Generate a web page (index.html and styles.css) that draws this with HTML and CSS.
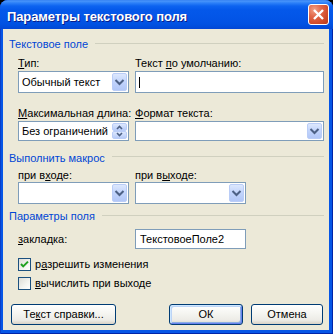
FILE: index.html
```html
<!DOCTYPE html>
<html lang="ru">
<head>
<meta charset="utf-8">
<title>Параметры текстового поля</title>
<link rel="stylesheet" href="styles.css">
</head>
<body>
<div class="window">
  <div class="titlebar">
    <span class="title">Параметры текстового поля</span>
    <span class="close">
      <svg width="21" height="21" viewBox="0 0 21 21"><path d="M6 6 L15 15 M15 6 L6 15" stroke="#fff" stroke-width="2.4" fill="none"/></svg>
    </span>
  </div>
  <div class="client">
    <div class="ghead">Текстовое поле</div>
    <div class="grid row-a">
      <div class="lbl"><u>Т</u>ип:</div>
      <div class="lbl">Текст <u>п</u>о умолчанию:</div>
      <div class="combo tall">
        <span class="val">Обычный текст</span>
        <span class="ddbtn"><svg width="15" height="18" viewBox="0 0 15 18"><polyline points="3.5,7 7.5,11 11.5,7" stroke="#4D6185" stroke-width="2" fill="none"/></svg></span>
      </div>
      <div class="edit tall"><span class="caret"></span></div>
    </div>
    <div class="grid row-b">
      <div class="lbl"><u>М</u>аксимальная длина:</div>
      <div class="lbl"><u>Ф</u>ормат текста:</div>
      <div class="combo short">
        <span class="val">Без ограничений</span>
        <span class="spin">
          <span class="sbtn"><svg width="15" height="8" viewBox="0 0 15 8"><polyline points="5,6 7.5,3.5 10,6" stroke="#4D6185" stroke-width="1.6" fill="none"/></svg></span>
          <span class="sbtn"><svg width="15" height="8" viewBox="0 0 15 8"><polyline points="5,2 7.5,4.5 10,2" stroke="#4D6185" stroke-width="1.6" fill="none"/></svg></span>
        </span>
      </div>
      <div class="combo short">
        <span class="val"></span>
        <span class="ddbtn"><svg width="15" height="16" viewBox="0 0 15 16"><polyline points="3.5,6 7.5,10 11.5,6" stroke="#4D6185" stroke-width="2" fill="none"/></svg></span>
      </div>
    </div>
    <div class="ghead g2">Выполнить макрос</div>
    <div class="grid row-c">
      <div class="lbl">при в<u>х</u>оде:</div>
      <div class="lbl">при в<u>ы</u>ходе:</div>
      <div class="combo tall">
        <span class="val"></span>
        <span class="ddbtn"><svg width="15" height="18" viewBox="0 0 15 18"><polyline points="3.5,7 7.5,11 11.5,7" stroke="#4D6185" stroke-width="2" fill="none"/></svg></span>
      </div>
      <div class="combo tall narrow">
        <span class="val"></span>
        <span class="ddbtn"><svg width="15" height="18" viewBox="0 0 15 18"><polyline points="3.5,7 7.5,11 11.5,7" stroke="#4D6185" stroke-width="2" fill="none"/></svg></span>
      </div>
    </div>
    <div class="ghead g3">Параметры поля</div>
    <div class="grid row-d">
      <div class="lbl"><u>з</u>акладка:</div>
      <div class="edit short narrow"><span class="val">ТекстовоеПоле2</span></div>
    </div>
    <div class="check c1">
      <span class="box"><svg width="11" height="11" viewBox="0 0 11 11"><path d="M2 5 L4.2 7.4 L9 2.6" stroke="#21A121" stroke-width="2" fill="none"/></svg></span>
      <span>р<u>а</u>зрешить изменения</span>
    </div>
    <div class="check c2">
      <span class="box"></span>
      <span><u>в</u>ычислить при выходе</span>
    </div>
    <div class="buttons">
      <div class="btn help">Те<u>к</u>ст справки...</div>
      <div class="btn ok">ОК</div>
      <div class="btn cancel">Отмена</div>
    </div>
  </div>
</div>
</body>
</html>
```
FILE: styles.css
```css
* { box-sizing: border-box; }
html, body { margin: 0; padding: 0; }
body {
  width: 333px;
  height: 334px;
  background: #000;
  overflow: hidden;
  font-family: "Liberation Sans", Arial, sans-serif;
  font-size: 11px;
  line-height: 13px;
  color: #000;
}
u { text-decoration: underline; text-underline-offset: 1px; }

.window {
  width: 333px;
  height: 334px;
  display: flex;
  flex-direction: column;
  background: #0656E6;
  border-radius: 8px 8px 0 0;
  box-shadow: inset 1px 0 #0A3FC8, inset -1px 0 #0024A8, inset 0 -1px #0024A8;
}
.titlebar {
  height: 29px;
  flex: none;
  display: flex;
  align-items: center;
  justify-content: space-between;
  padding: 2px 4px 0 7px;
  border-radius: 8px 8px 0 0;
  background: linear-gradient(to bottom, #2E7BF0 0px, #4A95FA 1px, #2C80F8 3px, #0D63F0 6px, #0458EA 10px, #0355E7 18px, #0152E2 24px, #004CDB 27px, #0446D4 29px);
}
.title {
  color: #fff;
  font-weight: bold;
  font-size: 13px;
  line-height: 15px;
  margin-top: 2px;
  text-shadow: 1px 1px #0A1E8A;
  letter-spacing: -0.1px;
}
.close {
  width: 21px;
  height: 21px;
  margin-bottom: 2px;
  border: 1px solid #fff;
  border-radius: 3px;
  background: radial-gradient(circle at 28% 25%, #F2A186 0, #E2684A 35%, #D24F2E 65%, #B83A1A 100%);
  display: flex;
  align-items: center;
  justify-content: center;
}
.close svg { display: block; margin: -1px; }

.client {
  flex: 1;
  margin: 0 4px 4px 3px;
  background: #ECE9D8;
  padding: 9px 5px 0 6px;
  display: flex;
  flex-direction: column;
}

.ghead {
  display: flex;
  color: #0046D5;
  height: 13px;
  white-space: nowrap;
}
.ghead::after {
  content: "";
  flex: 1;
  height: 1px;
  background: #D0D0BF;
  margin: 5px 0 0 7px;
}
.g2 { margin-top: 11px; }
.g2::after { margin-top: 4px; }
.g3 { margin-top: 6px; }

.grid {
  display: grid;
  grid-template-columns: 111px 189px;
  column-gap: 6px;
  margin-left: 9px;
}
.row-a { margin-top: 6px; row-gap: 1px; }
.row-b { margin-top: 14px; row-gap: 1px; }
.row-c { margin-top: 4px; row-gap: 0; }
.row-d { margin-top: 6px; align-items: center; }

.lbl { height: 13px; white-space: nowrap; }

.combo, .edit {
  border: 1px solid #7F9DB9;
  background: #fff;
  padding: 1px;
  display: flex;
  align-items: center;
}
.tall { height: 22px; }
.short { height: 20px; }
.narrow { width: 111px; }
.val {
  flex: 1;
  padding-left: 2px;
  white-space: nowrap;
  overflow: hidden;
}
.edit .val { padding-left: 3px; }
.caret {
  width: 1px;
  height: 11px;
  margin-left: 2px;
  margin-top: 1px;
  background: #000;
}
.ddbtn {
  width: 15px;
  align-self: stretch;
  border: 1px solid #BACDF7;
  border-radius: 2px;
  background: linear-gradient(to bottom, #DDE8FD, #C3D5FC 45%, #B2C7F7);
  display: flex;
  align-items: center;
  justify-content: center;
}
.ddbtn svg { display: block; margin: -1px; }
.spin {
  width: 15px;
  align-self: stretch;
  display: flex;
  flex-direction: column;
}
.sbtn {
  flex: 1;
  border: 1px solid #BACDF7;
  border-radius: 2px;
  background: linear-gradient(to bottom, #DDE8FD, #B7CBF8);
  display: flex;
  align-items: center;
  justify-content: center;
  overflow: hidden;
}
.sbtn svg { display: block; flex: none; }

.check {
  display: flex;
  align-items: center;
  gap: 4px;
  height: 13px;
  margin-left: 9px;
  white-space: nowrap;
}
.c1 { margin-top: 9px; }
.c2 { margin-top: 6px; }
.box {
  width: 13px;
  height: 13px;
  flex: none;
  border: 1px solid #1C5180;
  background: linear-gradient(135deg, #DCDCD6 0%, #F4F4F0 60%, #FFFFFF 100%);
}
.box svg { display: block; }

.buttons {
  display: flex;
  margin-top: 14px;
  margin-left: 2px;
}
.btn {
  height: 21px;
  border: 1px solid #003C74;
  border-radius: 3px;
  background: linear-gradient(to bottom, #FFFFFF 0%, #F6F6F2 40%, #ECEBE6 80%, #D8D2C6 100%);
  text-align: center;
  line-height: 19px;
  white-space: nowrap;
}
.help { width: 105px; }
.ok {
  width: 74px;
  margin-left: auto;
  box-shadow: inset 1px 1px #CEE7FF, inset -1px -1px #6982EE, inset 2px 2px #BCD4F6, inset -2px -2px #89ADE4;
}
.cancel { width: 72px; margin-left: 8px; margin-right: 1px; }
```
